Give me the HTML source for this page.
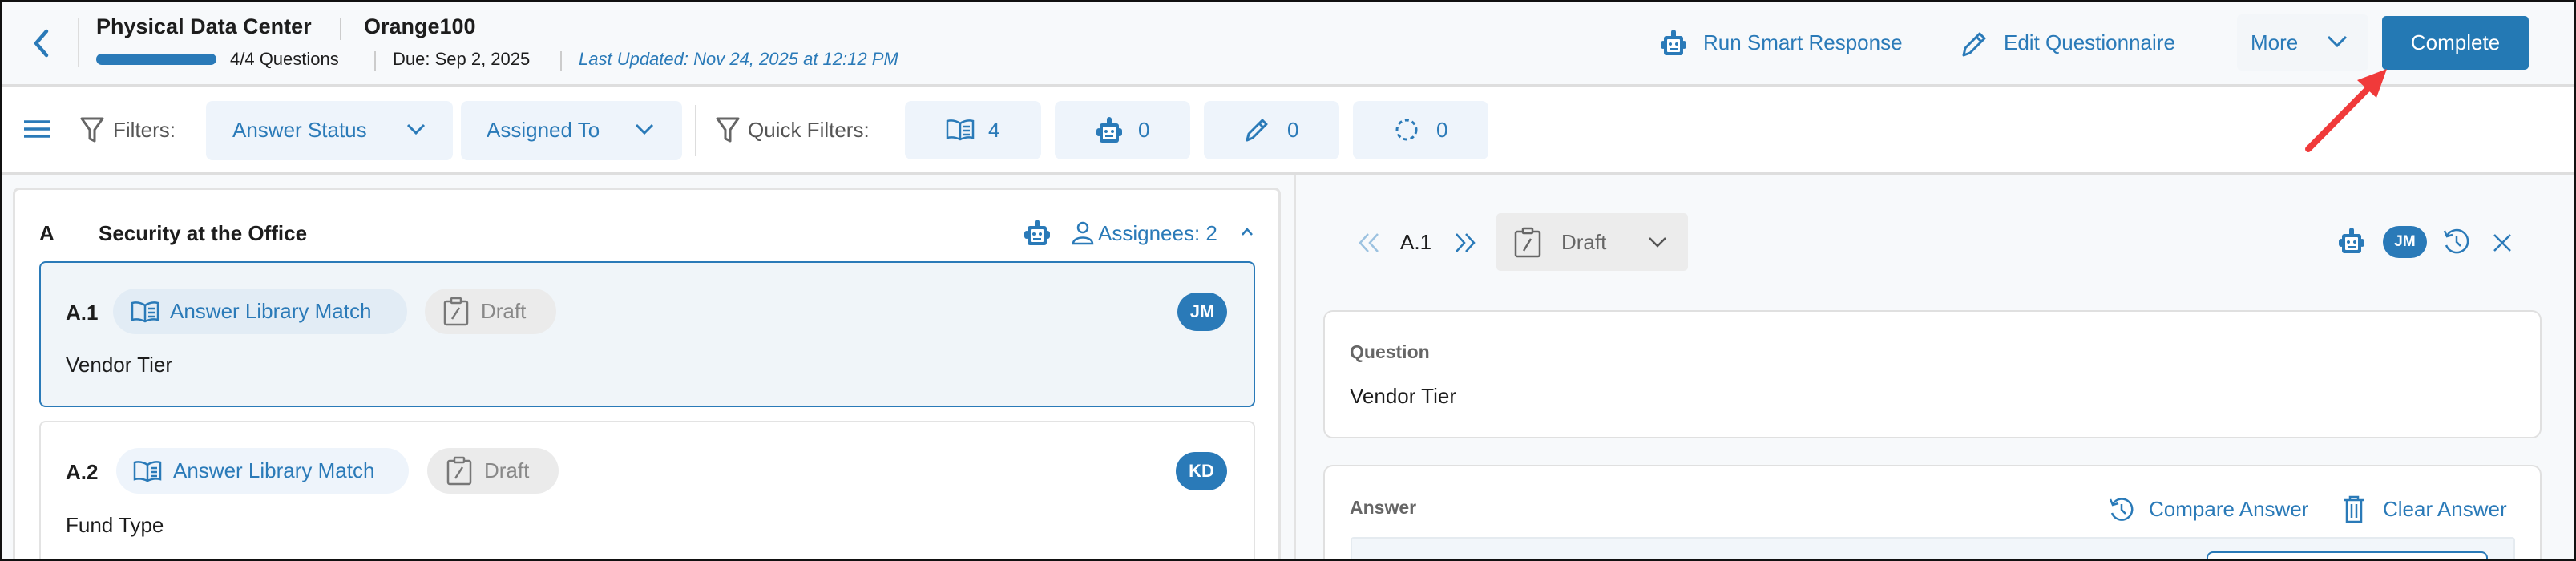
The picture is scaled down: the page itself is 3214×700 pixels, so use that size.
<!DOCTYPE html>
<html><head><meta charset="utf-8"><style>
*{box-sizing:border-box;margin:0;padding:0}
html,body{width:3214px;height:700px;overflow:hidden}
body{background:#f7f9fb;font-family:"Liberation Sans",sans-serif;color:#1d1d1d}
#w{position:relative;width:3214px;height:700px;overflow:hidden}
.a{position:absolute;white-space:nowrap}
.b{color:#2a7ab8}
.chip{position:absolute;background:#eef4fb;border-radius:8px}
svg{position:absolute;overflow:visible}
</style></head><body><div id="w">
<div class="a" style="left:0;top:0;width:3214px;height:108px;background:#f7f9fb;border-bottom:3px solid #dedede"></div>
<svg style="left:40px;top:36px" width="24" height="36"><path d="M18 3 L5 18 L18 33" fill="none" stroke="#2a7ab8" stroke-width="4.5" stroke-linecap="round" stroke-linejoin="round"/></svg>
<div class="a" style="left:97px;top:22px;width:2px;height:62px;background:#ddd"></div>
<div class="a" style="left:120px;top:18px;font-size:27px;font-weight:bold">Physical Data Center</div>
<div class="a" style="left:424px;top:22px;width:2px;height:28px;background:#ccc"></div>
<div class="a" style="left:454px;top:18px;font-size:27px;font-weight:bold">Orange100</div>
<div class="a" style="left:120px;top:67px;width:150px;height:14px;border-radius:7px;background:#2a7ab8"></div>
<div class="a" style="left:287px;top:61px;font-size:22px">4/4 Questions</div>
<div class="a" style="left:467px;top:64px;width:2px;height:24px;background:#ccc"></div>
<div class="a" style="left:490px;top:61px;font-size:22px">Due: Sep 2, 2025</div>
<div class="a" style="left:699px;top:64px;width:2px;height:24px;background:#ccc"></div>
<div class="a b" style="left:722px;top:61px;font-size:22px;font-style:italic">Last Updated: Nov 24, 2025 at 12:12 PM</div>
<svg style="left:2070px;top:36px" width="36" height="36" viewBox="0 0 36 36"><g fill="#2a7ab8"><circle cx="18" cy="4" r="3"/><rect x="15" y="4" width="6" height="5"/><rect x="6" y="9" width="24" height="24" rx="3"/><rect x="2" y="15" width="6" height="10" rx="3"/><rect x="28" y="15" width="6" height="10" rx="3"/></g><rect x="10" y="13" width="16" height="16" rx="1" fill="#fff"/><circle cx="14" cy="19" r="2" fill="#2a7ab8"/><circle cx="22" cy="19" r="2" fill="#2a7ab8"/><rect x="13" y="24" width="10" height="2" fill="#2a7ab8"/></svg>
<div class="a b" style="left:2125px;top:38px;font-size:26px">Run Smart Response</div>
<svg style="left:2446px;top:38px" width="34" height="34"><path d="M4 31 L6 22 L24 4 L30 10 L12 28 Z M20 8 L26 14" fill="none" stroke="#2a7ab8" stroke-width="3" stroke-linejoin="round"/></svg>
<div class="a b" style="left:2500px;top:38px;font-size:26px">Edit Questionnaire</div>
<div class="a" style="left:2791px;top:18px;width:164px;height:70px;background:#f3f6f9;border-radius:6px"></div>
<div class="a b" style="left:2808px;top:38px;font-size:26px">More</div>
<svg style="left:2903px;top:44px" width="26" height="16"><path d="M2 2 L13 13 L24 2" fill="none" stroke="#2a7ab8" stroke-width="3"/></svg>
<div class="a" style="left:2972px;top:20px;width:183px;height:67px;background:#2479b4;border-radius:5px;color:#fff;font-size:26px;line-height:67px;text-align:center">Complete</div>
<div class="a" style="left:0;top:108px;width:3214px;height:110px;background:#fff;border-bottom:3px solid #dedede"></div>
<svg style="left:30px;top:150px" width="32" height="22"><path d="M0 2 H32 M0 11 H32 M0 20 H32" stroke="#2a7ab8" stroke-width="3.5"/></svg>
<svg style="left:100px;top:146px" width="30" height="32"><path d="M2 2 H28 L18 16 V30 L12 27 V16 Z" fill="none" stroke="#666" stroke-width="3" stroke-linejoin="round"/></svg>
<div class="a" style="left:141px;top:147px;font-size:26px;color:#555">Filters:</div>
<div class="chip" style="left:257px;top:126px;width:308px;height:74px"></div>
<div class="a b" style="left:290px;top:147px;font-size:26px">Answer Status</div>
<svg style="left:507px;top:154px" width="24" height="14"><path d="M2 2 L12 12 L22 2" fill="none" stroke="#2a7ab8" stroke-width="3"/></svg>
<div class="chip" style="left:575px;top:126px;width:276px;height:74px"></div>
<div class="a b" style="left:607px;top:147px;font-size:26px">Assigned To</div>
<svg style="left:792px;top:154px" width="24" height="14"><path d="M2 2 L12 12 L22 2" fill="none" stroke="#2a7ab8" stroke-width="3"/></svg>
<div class="a" style="left:867px;top:131px;width:2px;height:64px;background:#ddd"></div>
<svg style="left:893px;top:146px" width="30" height="32"><path d="M2 2 H28 L18 16 V30 L12 27 V16 Z" fill="none" stroke="#666" stroke-width="3" stroke-linejoin="round"/></svg>
<div class="a" style="left:933px;top:147px;font-size:26px;color:#555">Quick Filters:</div>
<div class="chip" style="left:1129px;top:126px;width:170px;height:73px"></div>
<svg style="left:1180px;top:148px" width="36" height="28"><path d="M18 6 C12 2 6 2 2 3 V24 C6 23 12 23 18 26 C24 23 30 23 34 24 V3 C30 2 24 2 18 6 Z M18 6 V26 M22 10 H30 M22 15 H30 M22 20 H30" fill="none" stroke="#2a7ab8" stroke-width="2.5"/></svg>
<div class="a b" style="left:1233px;top:147px;font-size:26px">4</div>
<div class="chip" style="left:1316px;top:126px;width:169px;height:73px"></div>
<svg style="left:1366px;top:145px" width="36" height="36" viewBox="0 0 36 36"><g fill="#2a7ab8"><circle cx="18" cy="4" r="3"/><rect x="15" y="4" width="6" height="5"/><rect x="6" y="9" width="24" height="24" rx="3"/><rect x="2" y="15" width="6" height="10" rx="3"/><rect x="28" y="15" width="6" height="10" rx="3"/></g><rect x="10" y="13" width="16" height="16" rx="1" fill="#fff"/><circle cx="14" cy="19" r="2" fill="#2a7ab8"/><circle cx="22" cy="19" r="2" fill="#2a7ab8"/><rect x="13" y="24" width="10" height="2" fill="#2a7ab8"/></svg>
<div class="a b" style="left:1420px;top:147px;font-size:26px">0</div>
<div class="chip" style="left:1502px;top:126px;width:169px;height:73px"></div>
<svg style="left:1552px;top:146px" width="32" height="32"><path d="M4 29 L6 21 L23 4 L28 9 L11 26 Z M19 8 L24 13" fill="none" stroke="#2a7ab8" stroke-width="3" stroke-linejoin="round"/></svg>
<div class="a b" style="left:1606px;top:147px;font-size:26px">0</div>
<div class="chip" style="left:1688px;top:126px;width:169px;height:73px"></div>
<svg style="left:1740px;top:147px" width="30" height="30"><circle cx="15" cy="15" r="12" fill="none" stroke="#2a7ab8" stroke-width="3" stroke-dasharray="5 4"/></svg>
<div class="a b" style="left:1792px;top:147px;font-size:26px">0</div>
<div class="a" style="left:16px;top:234px;width:1582px;height:466px;background:#fff;border:3px solid #e3e3e3;border-bottom:none;border-radius:8px 8px 0 0"></div>
<div class="a" style="left:49px;top:276px;font-size:26px;font-weight:bold">A</div>
<div class="a" style="left:123px;top:276px;font-size:26px;font-weight:bold">Security at the Office</div>
<svg style="left:1276px;top:273px" width="36" height="36" viewBox="0 0 36 36"><g fill="#2a7ab8"><circle cx="18" cy="4" r="3"/><rect x="15" y="4" width="6" height="5"/><rect x="6" y="9" width="24" height="24" rx="3"/><rect x="2" y="15" width="6" height="10" rx="3"/><rect x="28" y="15" width="6" height="10" rx="3"/></g><rect x="10" y="13" width="16" height="16" rx="1" fill="#fff"/><circle cx="14" cy="19" r="2" fill="#2a7ab8"/><circle cx="22" cy="19" r="2" fill="#2a7ab8"/><rect x="13" y="24" width="10" height="2" fill="#2a7ab8"/></svg>
<svg style="left:1337px;top:276px" width="28" height="30"><circle cx="14" cy="8" r="6" fill="none" stroke="#2a7ab8" stroke-width="2.5"/><path d="M2 28 C2 18 26 18 26 28 Z" fill="none" stroke="#2a7ab8" stroke-width="2.5"/></svg>
<div class="a b" style="left:1370px;top:276px;font-size:26px">Assignees: 2</div>
<svg style="left:1548px;top:284px" width="16" height="10"><path d="M2 9 L8 2 L14 9" fill="none" stroke="#2a7ab8" stroke-width="2.5"/></svg>
<div class="a" style="left:49px;top:326px;width:1517px;height:182px;background:#f0f5f9;border:2.5px solid #2a7ab8;border-radius:8px"></div>
<div class="a" style="left:82px;top:375px;font-size:26px;font-weight:bold">A.1</div>
<div class="a" style="left:141px;top:360px;width:367px;height:57px;background:#e2ecf5;border-radius:29px"></div>
<svg style="left:163px;top:375px" width="36" height="28"><path d="M18 6 C12 2 6 2 2 3 V24 C6 23 12 23 18 26 C24 23 30 23 34 24 V3 C30 2 24 2 18 6 Z M18 6 V26 M22 10 H30 M22 15 H30 M22 20 H30" fill="none" stroke="#2a7ab8" stroke-width="2.5"/></svg>
<div class="a b" style="left:212px;top:373px;font-size:26px">Answer Library Match</div>
<div class="a" style="left:530px;top:360px;width:164px;height:57px;background:#ebebeb;border-radius:29px"></div>
<svg style="left:553px;top:371px" width="32" height="36"><rect x="2" y="5" width="28" height="29" rx="2" fill="none" stroke="#777" stroke-width="2.5"/><rect x="10" y="1" width="12" height="6" rx="1" fill="#ebebeb" stroke="#777" stroke-width="2.5"/><path d="M11 27 L20 13" stroke="#777" stroke-width="2.5"/></svg>
<div class="a" style="left:600px;top:373px;font-size:26px;color:#888">Draft</div>
<div class="a" style="left:1469px;top:365px;width:62px;height:48px;background:#2a7ab8;border-radius:24px;color:#fff;font-size:22px;font-weight:bold;line-height:48px;text-align:center">JM</div>
<div class="a" style="left:82px;top:440px;font-size:26px">Vendor Tier</div>
<div class="a" style="left:49px;top:525px;width:1517px;height:175px;background:#fff;border:2.5px solid #e3e3e3;border-bottom:none;border-radius:8px 8px 0 0"></div>
<div class="a" style="left:82px;top:574px;font-size:26px;font-weight:bold">A.2</div>
<div class="a" style="left:145px;top:559px;width:365px;height:57px;background:#eef4fb;border-radius:29px"></div>
<svg style="left:166px;top:574px" width="36" height="28"><path d="M18 6 C12 2 6 2 2 3 V24 C6 23 12 23 18 26 C24 23 30 23 34 24 V3 C30 2 24 2 18 6 Z M18 6 V26 M22 10 H30 M22 15 H30 M22 20 H30" fill="none" stroke="#2a7ab8" stroke-width="2.5"/></svg>
<div class="a b" style="left:216px;top:572px;font-size:26px">Answer Library Match</div>
<div class="a" style="left:533px;top:559px;width:164px;height:57px;background:#ebebeb;border-radius:29px"></div>
<svg style="left:557px;top:570px" width="32" height="36"><rect x="2" y="5" width="28" height="29" rx="2" fill="none" stroke="#777" stroke-width="2.5"/><rect x="10" y="1" width="12" height="6" rx="1" fill="#ebebeb" stroke="#777" stroke-width="2.5"/><path d="M11 27 L20 13" stroke="#777" stroke-width="2.5"/></svg>
<div class="a" style="left:604px;top:572px;font-size:26px;color:#888">Draft</div>
<div class="a" style="left:1467px;top:564px;width:64px;height:48px;background:#2a7ab8;border-radius:24px;color:#fff;font-size:22px;font-weight:bold;line-height:48px;text-align:center">KD</div>
<div class="a" style="left:82px;top:640px;font-size:26px">Fund Type</div>
<div class="a" style="left:1614px;top:218px;width:3px;height:482px;background:#e3e3e3"></div>
<svg style="left:1693px;top:290px" width="30" height="26"><path d="M14 2 L4 13 L14 24 M26 2 L16 13 L26 24" fill="none" stroke="#9cc2e0" stroke-width="2.5"/></svg>
<div class="a" style="left:1747px;top:287px;font-size:26px">A.1</div>
<svg style="left:1813px;top:290px" width="30" height="26"><path d="M4 2 L14 13 L4 24 M16 2 L26 13 L16 24" fill="none" stroke="#2a7ab8" stroke-width="2.5"/></svg>
<div class="a" style="left:1867px;top:266px;width:239px;height:72px;background:#ececec;border-radius:5px"></div>
<svg style="left:1889px;top:284px" width="34" height="38"><rect x="2" y="5" width="30" height="31" rx="2" fill="none" stroke="#666" stroke-width="2.5"/><rect x="11" y="1" width="12" height="6" rx="1" fill="#ececec" stroke="#666" stroke-width="2.5"/><path d="M12 29 L21 14" stroke="#666" stroke-width="2.5"/></svg>
<div class="a" style="left:1948px;top:287px;font-size:26px;color:#666">Draft</div>
<svg style="left:2056px;top:295px" width="24" height="14"><path d="M2 2 L12 12 L22 2" fill="none" stroke="#555" stroke-width="2.5"/></svg>
<svg style="left:2916px;top:283px" width="36" height="36" viewBox="0 0 36 36"><g fill="#2a7ab8"><circle cx="18" cy="4" r="3"/><rect x="15" y="4" width="6" height="5"/><rect x="6" y="9" width="24" height="24" rx="3"/><rect x="2" y="15" width="6" height="10" rx="3"/><rect x="28" y="15" width="6" height="10" rx="3"/></g><rect x="10" y="13" width="16" height="16" rx="1" fill="#fff"/><circle cx="14" cy="19" r="2" fill="#2a7ab8"/><circle cx="22" cy="19" r="2" fill="#2a7ab8"/><rect x="13" y="24" width="10" height="2" fill="#2a7ab8"/></svg>
<div class="a" style="left:2973px;top:282px;width:55px;height:40px;background:#2a7ab8;border-radius:20px;color:#fff;font-size:19px;font-weight:bold;line-height:40px;text-align:center">JM</div>
<svg style="left:3047px;top:284px" width="36" height="36"><path d="M6 10 A14 14 0 1 1 5 22" fill="none" stroke="#2a7ab8" stroke-width="2.5"/><path d="M3 4 L6 11 L13 9" fill="none" stroke="#2a7ab8" stroke-width="2.5"/><path d="M18 10 V18 L23 23" fill="none" stroke="#2a7ab8" stroke-width="2.5"/></svg>
<svg style="left:3110px;top:291px" width="24" height="24"><path d="M2 2 L22 22 M22 2 L2 22" stroke="#2a7ab8" stroke-width="2.5"/></svg>
<div class="a" style="left:1651px;top:387px;width:1520px;height:160px;background:#fff;border:2.5px solid #e0e0e0;border-radius:12px"></div>
<div class="a" style="left:1684px;top:426px;font-size:23px;font-weight:bold;color:#666">Question</div>
<div class="a" style="left:1684px;top:479px;font-size:26px">Vendor Tier</div>
<div class="a" style="left:1651px;top:580px;width:1520px;height:120px;background:#fff;border:2.5px solid #e0e0e0;border-bottom:none;border-radius:12px 12px 0 0"></div>
<div class="a" style="left:1684px;top:620px;font-size:23px;font-weight:bold;color:#666">Answer</div>
<svg style="left:2630px;top:619px" width="34" height="34"><path d="M6 10 A13 13 0 1 1 5 21" fill="none" stroke="#2a7ab8" stroke-width="2.5"/><path d="M3 4 L6 11 L13 9" fill="none" stroke="#2a7ab8" stroke-width="2.5"/><path d="M17 10 V17 L22 22" fill="none" stroke="#2a7ab8" stroke-width="2.5"/></svg>
<div class="a b" style="left:2681px;top:620px;font-size:26px">Compare Answer</div>
<svg style="left:2923px;top:618px" width="28" height="36"><path d="M2 6 H26 M9 6 V2 H19 V6 M5 6 V33 H23 V6 M11 11 V28 M17 11 V28" fill="none" stroke="#2a7ab8" stroke-width="2.5"/></svg>
<div class="a b" style="left:2973px;top:620px;font-size:26px">Clear Answer</div>
<div class="a" style="left:1685px;top:670px;width:1453px;height:30px;background:#f2f6fa;border:2px solid #e5ebf0;border-bottom:none;border-radius:4px 4px 0 0"></div>
<div class="a" style="left:2753px;top:688px;width:351px;height:12px;background:#fff;border:2.5px solid #2a7ab8;border-bottom:none;border-radius:8px 8px 0 0"></div>
<svg style="left:0;top:0;z-index:5" width="3214" height="700"><line x1="2880" y1="186" x2="2955" y2="110" stroke="#f03a3a" stroke-width="8" stroke-linecap="round"/><path d="M2978 86 L2941 100 L2965 122 Z" fill="#f03a3a"/></svg>
<div class="a" style="left:0;top:0;width:3214px;height:700px;border:3px solid #111;z-index:6"></div>
</div></body></html>
